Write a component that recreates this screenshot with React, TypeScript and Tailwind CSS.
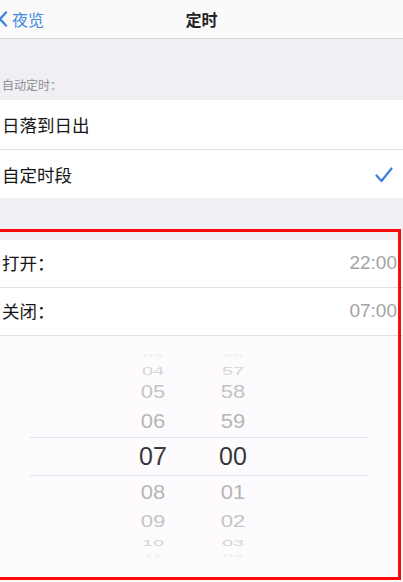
const cjk = "font-['Noto_Sans_CJK_SC','Noto_Sans',sans-serif]";

type WheelItem = { h: string; m: string; row: string; text: string; color: string; scale: string };

const wheelTop: WheelItem[] = [
  { h: "03", m: "56", row: "h-[12px]", text: "text-[18px]", color: "text-[#ececec]", scale: "scale-y-[0.2]" },
  { h: "04", m: "57", row: "h-[17px]", text: "text-[20px]", color: "text-[#d4d4d4]", scale: "scale-y-50" },
  { h: "05", m: "58", row: "h-[25px]", text: "text-[22px]", color: "text-[#c4c4c4]", scale: "scale-y-[0.8]" },
  { h: "06", m: "59", row: "h-[33px]", text: "text-[22px]", color: "text-[#b6b6b6]", scale: "scale-y-95" },
];

const wheelBottom: WheelItem[] = [
  { h: "08", m: "01", row: "h-[34px]", text: "text-[22px]", color: "text-[#b6b6b6]", scale: "scale-y-90" },
  { h: "09", m: "02", row: "h-[24px]", text: "text-[22px]", color: "text-[#c4c4c4]", scale: "scale-y-75" },
  { h: "10", m: "03", row: "h-[18px]", text: "text-[20px]", color: "text-[#d4d4d4]", scale: "scale-y-[0.45]" },
  { h: "11", m: "04", row: "h-[8px]", text: "text-[18px]", color: "text-[#ececec]", scale: "scale-y-[0.2]" },
];

function WheelRow({ item }: { item: WheelItem }) {
  return (
    <div className={`flex items-center overflow-visible ${item.row}`}>
      <span className={`ml-[128px] w-[50px] text-center leading-none ${item.text} ${item.color} ${item.scale}`}>
        {item.h}
      </span>
      <span className={`ml-[30px] w-[50px] text-center leading-none ${item.text} ${item.color} ${item.scale}`}>
        {item.m}
      </span>
    </div>
  );
}

function Row({ label, value }: { label: string; value?: string }) {
  return (
    <div className="flex h-[48px] items-center justify-between border-b border-[#e2e2e6] bg-white pl-[2px] pr-[6px]">
      <span className={`${cjk} text-[17.5px] text-[#161616]`}>{label}</span>
      {value && (
        <span className="font-['Liberation_Sans',sans-serif] text-[19px] text-[#a3a3a3]">{value}</span>
      )}
    </div>
  );
}

export default function App() {
  return (
    <div className="relative h-[582px] w-[403px] overflow-hidden bg-[#efeff4]">
      {/* nav bar */}
      <header className="relative flex h-[39px] items-center justify-center border-b border-[#d4d4d8] bg-[#fafafa]">
        <div className="absolute left-[-2px] top-0 flex h-full items-center gap-[4px]">
          <svg width="10" height="16" viewBox="0 0 10 16" fill="none">
            <path d="M8 1.5 L2 8 L8 14.5" stroke="#3d86e2" strokeWidth="2.4" strokeLinecap="round" strokeLinejoin="round" />
          </svg>
          <span className={`${cjk} text-[16px] text-[#4189e0]`}>夜览</span>
        </div>
        <span className={`${cjk} text-[16px] font-semibold text-[#222]`}>定时</span>
      </header>

      {/* auto section */}
      <div className="flex h-[61px] items-end pb-[6px] pl-[2px]">
        <span className={`${cjk} text-[12px] text-[#8e8e93]`}>自动定时：</span>
      </div>
      <div className="flex h-[50px] items-center border-b border-[#e2e2e6] bg-white pl-[2px] pt-[2px]">
        <span className={`${cjk} text-[17.5px] text-[#161616]`}>日落到日出</span>
      </div>
      <div className="flex h-[48px] items-center justify-between bg-white pl-[2px] pr-[10px] pt-[2px]">
        <span className={`${cjk} text-[17.5px] text-[#161616]`}>自定时段</span>
        <svg width="18" height="16" viewBox="0 0 18 16" fill="none">
          <path d="M1.5 8.5 L6.5 14 L16.5 1.5" stroke="#3a7fe0" strokeWidth="2.2" strokeLinecap="round" strokeLinejoin="round" />
        </svg>
      </div>

      <div className="h-[42px]" />

      {/* custom time section */}
      <Row label="打开：" value="22:00" />
      <Row label="关闭：" value="07:00" />

      <div className="h-[250px] bg-[#fdfbfe] pt-[14px] font-['Liberation_Sans',sans-serif]">
        {wheelTop.map((it) => (
          <WheelRow key={it.h} item={it} />
        ))}
        <div className="ml-[30px] mr-[34px] flex h-[39px] items-center border-y border-[#e4e4e8]">
          <span className="ml-[98px] w-[50px] text-center text-[25px] leading-none text-[#383838]">07</span>
          <span className="ml-[30px] w-[50px] text-center text-[25px] leading-none text-[#383838]">00</span>
        </div>
        {wheelBottom.map((it) => (
          <WheelRow key={it.h} item={it} />
        ))}
      </div>

      {/* red annotation frame */}
      <div className="pointer-events-none absolute left-[-3px] top-[229px] h-[351px] w-[404px] border-[3px] border-[#ff0a0a]" />
    </div>
  );
}
